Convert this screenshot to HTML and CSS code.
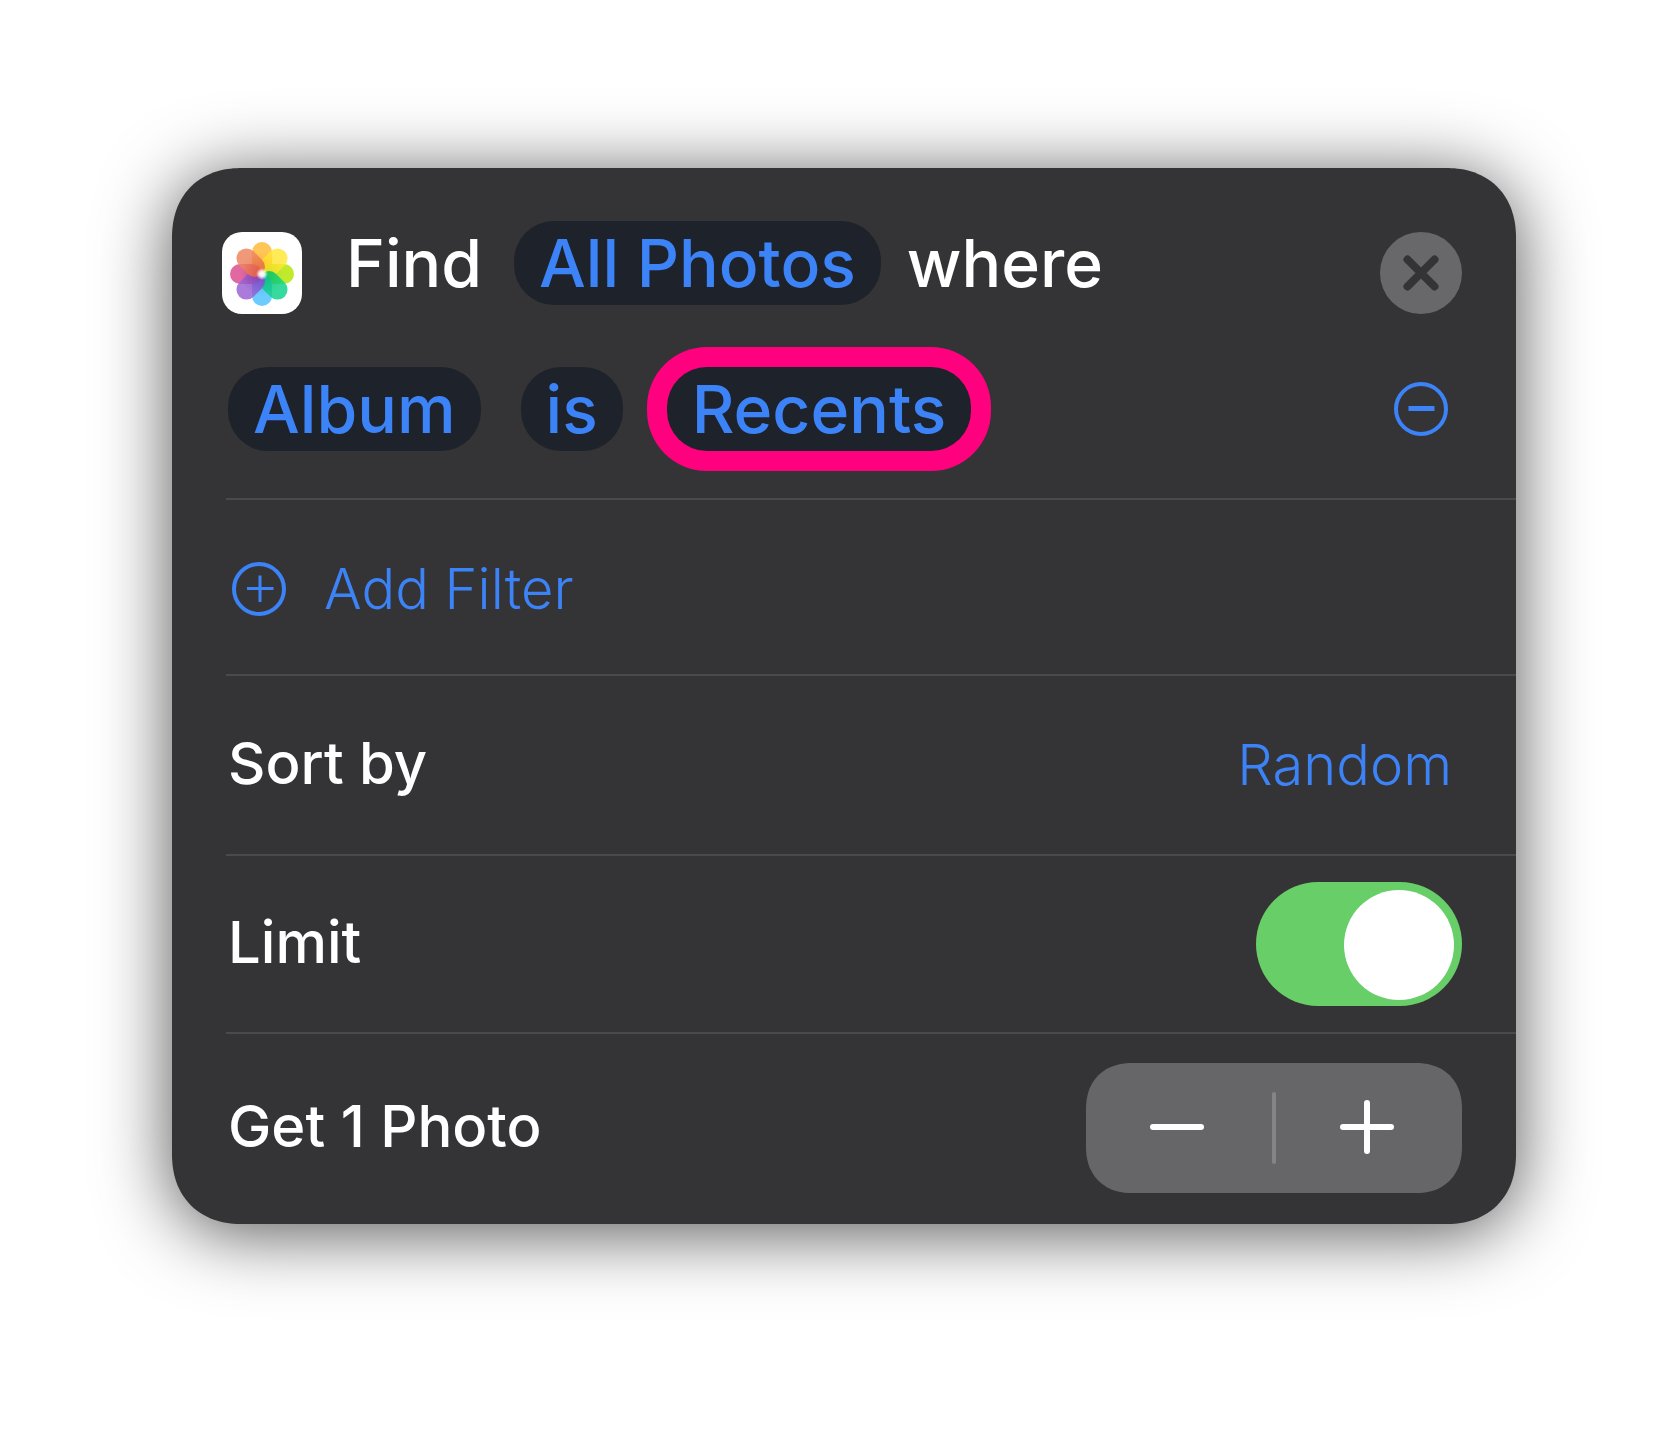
FILE: index.html
```html
<!DOCTYPE html>
<html lang="en">
<head>
<meta charset="utf-8">
<meta name="viewport" content="width=device-width, initial-scale=1">
<title>Find Photos</title>
<link rel="stylesheet" href="styles.css">
</head>
<body>
<main class="card">
  <section class="filter">
    <div class="filter-title">
      <svg class="app-icon" viewBox="0 0 80 82" aria-hidden="true">
        <defs>
          <radialGradient id="glow">
            <stop offset="0" stop-color="#fff"/>
            <stop offset=".45" stop-color="#fff" stop-opacity=".85"/>
            <stop offset="1" stop-color="#fff" stop-opacity="0"/>
          </radialGradient>
          <radialGradient id="core" gradientUnits="userSpaceOnUse" cx="0" cy="0" r="22">
            <stop offset="0" stop-color="#fff" stop-opacity=".6"/>
            <stop offset=".4" stop-color="#fff" stop-opacity=".4"/>
            <stop offset="1" stop-color="#fff" stop-opacity="0"/>
          </radialGradient>
          <mask id="core-mask" maskUnits="userSpaceOnUse" x="-32" y="-32" width="64" height="64">
            <rect x="-32" y="-32" width="64" height="64" fill="url(#core)"/>
          </mask>
          <g id="straight">
            <rect x="-10" y="-32" width="20" height="32" rx="10" fill="#ffc557"/>
            <rect x="-10" y="-32" width="20" height="32" rx="10" fill="#c1ea2d" transform="rotate(90)"/>
            <rect x="-10" y="-32" width="20" height="32" rx="10" fill="#6ecbff" transform="rotate(180)"/>
            <rect x="-10" y="-32" width="20" height="32" rx="10" fill="#e069a2" transform="rotate(270)"/>
          </g>
          <g id="diagonal">
            <rect x="-10" y="-32" width="20" height="32" rx="10" fill="#ffe737" transform="rotate(45)"/>
            <rect x="-10" y="-32" width="20" height="32" rx="10" fill="#12d38c" transform="rotate(135)"/>
            <rect x="-10" y="-32" width="20" height="32" rx="10" fill="#9a62d4" transform="rotate(225)"/>
            <rect x="-10" y="-32" width="20" height="32" rx="10" fill="#ee8660" transform="rotate(315)"/>
          </g>
        </defs>
        <rect width="80" height="82" rx="20" fill="#fff"/>
        <g transform="translate(40 42)">
          <use href="#straight"/>
          <use href="#diagonal" opacity=".84"/>
          <g class="blend" mask="url(#core-mask)">
            <use href="#straight"/>
            <use href="#diagonal" opacity=".6"/>
          </g>
        </g>
        <circle cx="40" cy="42" r="6" fill="url(#glow)"/>
      </svg>
      <div class="sentence">
        <span class="verb">Find</span>
        <button class="pill" type="button">All Photos</button>
        <span>where</span>
      </div>
      <button class="close" type="button" aria-label="Remove action">
        <svg viewBox="0 0 82 82" aria-hidden="true"><path d="M27.500 27.500l27 27M54.500 27.500l-27 27" stroke="#343436" stroke-width="8" stroke-linecap="round"/></svg>
      </button>
    </div>
    <div class="filter-rule">
      <button class="pill" type="button">Album</button>
      <button class="pill" type="button">is</button>
      <button class="pill pill-marked" type="button">Recents</button>
      <button class="round remove" type="button" aria-label="Remove filter">
        <svg viewBox="0 0 54 54" aria-hidden="true"><circle cx="27" cy="27" r="25" fill="none" stroke="#3c83f7" stroke-width="4"/><path d="M14.500 26.500h26" stroke="#3c83f7" stroke-width="5"/></svg>
      </button>
    </div>
  </section>
  <button class="row add" type="button">
    <svg class="round" viewBox="0 0 54 54" aria-hidden="true"><circle cx="27" cy="27" r="25" fill="none" stroke="#3c83f7" stroke-width="4"/><path d="M15 26.500h26.500M28 13.500v26.500" stroke="#3c83f7" stroke-width="3"/></svg>
    <span>Add Filter</span>
  </button>
  <div class="row row-sort">
    <span class="name" id="sort-label">Sort by</span>
    <button class="value" type="button" aria-describedby="sort-label">Random</button>
  </div>
  <div class="row">
    <label class="name" for="limit">Limit</label>
    <input class="switch" id="limit" type="checkbox" role="switch" checked>
  </div>
  <div class="row row-last">
    <span class="name" id="count-label">Get 1 Photo</span>
    <div class="stepper" role="group" aria-labelledby="count-label">
      <button type="button" aria-label="Decrease">
        <svg viewBox="0 0 54 54" aria-hidden="true"><path d="M3 27h48" stroke="#fff" stroke-width="6" stroke-linecap="round"/></svg>
      </button>
      <span class="stepper-line"></span>
      <button type="button" aria-label="Increase">
        <svg viewBox="0 0 54 54" aria-hidden="true"><path d="M3 27h48M27 3v48" stroke="#fff" stroke-width="6" stroke-linecap="round"/></svg>
      </button>
    </div>
  </div>
</main>
</body>
</html>
```
FILE: styles.css
```css
* {
  box-sizing: border-box;
}

body {
  margin: 0;
  padding: 168px 140px 228px 172px;
  background: #fff;
  color: #fff;
  font-family: Inter, "Liberation Sans", sans-serif;
  font-size: 58px;
  font-weight: 500;
  line-height: 72px;
}

button {
  margin: 0;
  padding: 0;
  border: 0;
  background: none;
  color: #3c83f7;
  font: inherit;
  cursor: pointer;
}

svg {
  display: block;
}

.card {
  padding-left: 54px;
  border-radius: 62px;
  background: #343436;
  box-shadow: 0 8px 72px rgba(0, 0, 0, 0.68);
}

/* Filter sentence */
.filter {
  padding: 53px 54px 47px 0;
  border-bottom: 2px solid #4a4a4c;
  font-size: 66px;
  line-height: 84px;
}

.filter-title {
  display: flex;
  align-items: flex-end;
  min-height: 93px;
  margin-left: -4px;
}

.app-icon {
  flex: none;
  width: 80px;
  height: 82px;
}

.blend {
  mix-blend-mode: multiply;
}

.sentence {
  display: flex;
  align-self: flex-start;
  gap: 26px;
  margin-left: 44px;
}

.verb {
  margin-right: 6px;
}

.pill {
  padding: 0 25px;
  border-radius: 40px;
  background: #1e222a;
  white-space: nowrap;
}

.close {
  width: 82px;
  height: 82px;
  margin-left: auto;
  border-radius: 50%;
  background: #68686a;
}

.filter-rule {
  display: flex;
  align-items: center;
  gap: 40px;
  margin-top: 53px;
  padding: 0 14px 0 2px;
}

.pill-marked {
  margin-left: 4px;
  box-shadow: 0 0 0 20px #ff007f;
}

.round {
  flex: none;
  width: 54px;
  height: 54px;
}

.remove {
  margin-left: auto;
}

/* Option rows */
.row {
  display: flex;
  align-items: center;
  justify-content: space-between;
  width: 100%;
  min-height: 178px;
  padding: 0 54px 0 2px;
  border-bottom: 2px solid #4a4a4c;
}

.row-sort {
  min-height: 180px;
}

.row-last {
  min-height: 190px;
  padding-bottom: 2px;
  border-bottom: 0;
}

.name {
  padding-bottom: 4px;
}

.add {
  justify-content: flex-start;
  gap: 38px;
  min-height: 176px;
  padding-top: 4px;
  padding-left: 6px;
  font-size: 56px;
  font-weight: 300;
}

.value {
  padding-right: 10px;
  font-size: 56px;
  font-weight: 300;
}

.switch {
  display: flex;
  justify-content: flex-end;
  width: 206px;
  height: 124px;
  margin: 0;
  padding: 8px 8px 6px;
  border-radius: 62px;
  appearance: none;
  background: #68ce67;
}

.switch::before {
  width: 110px;
  height: 110px;
  border-radius: 50%;
  background: #fff;
  content: "";
}

.switch:not(:checked) {
  justify-content: flex-start;
  background: #68686a;
}

.stepper {
  display: flex;
  align-items: center;
  width: 376px;
  height: 130px;
  border-radius: 42px;
  background: #666668;
}

.stepper button {
  display: grid;
  flex: 1;
  place-items: center;
  height: 100%;
  padding: 0 4px 2px 0;
}

.stepper svg {
  width: 54px;
  height: 54px;
}

.stepper-line {
  width: 4px;
  height: 72px;
  border-radius: 2px;
  background: #858587;
}

/* Continuous corners where the browser can draw them */
@supports (corner-shape: superellipse(1.15)) {
  .card {
    border-radius: 70px;
    corner-shape: superellipse(1.15);
  }

  .stepper {
    border-radius: 46px;
    corner-shape: superellipse(1.15);
  }
}
```
